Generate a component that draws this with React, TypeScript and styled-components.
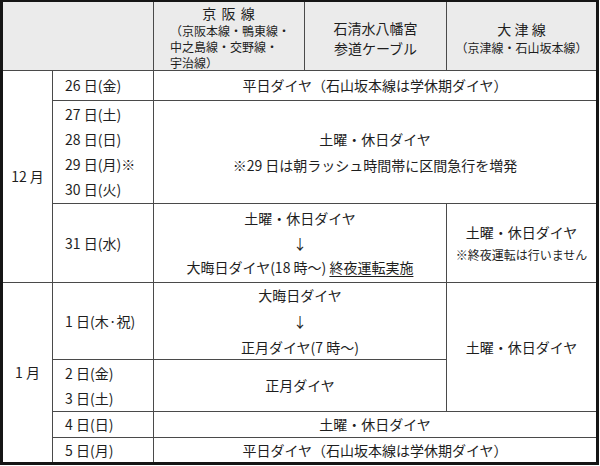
import styled, { createGlobalStyle } from "styled-components";

const GlobalStyle = createGlobalStyle`
  html, body {
    margin: 0;
    padding: 0;
    background: #fff;
  }
  body {
    font-family: "Noto Sans CJK JP", "Noto Sans", sans-serif;
    color: #1e1e1e;
  }
`;

const Table = styled.div`
  width: 599px;
  box-sizing: border-box;
  border: 3px solid #151515;
  border-top-width: 2px;
  display: grid;
  grid-template-columns: 49px 100px 150px 141px 149px;
  grid-template-rows: 68px 29px 102px 78px 76px 51px 25px 24px;
  gap: 1px;
  background: #4a4a4a;
`;

const Cell = styled.div<{
  $col: string;
  $row: string;
  $head?: boolean;
  $left?: boolean;
  $lh?: number;
}>`
  grid-column: ${({ $col }) => $col};
  grid-row: ${({ $row }) => $row};
  background: ${({ $head }) => ($head ? "#ebebeb" : "#fff")};
  display: flex;
  flex-direction: column;
  justify-content: center;
  align-items: ${({ $left }) => ($left ? "flex-start" : "center")};
  padding-left: ${({ $left }) => ($left ? "12px" : "0")};
  font-size: 14px;
  line-height: ${({ $lh }) => $lh ?? 25}px;
  white-space: nowrap;
`;

const HeadCell = styled(Cell)`
  justify-content: flex-start;
  padding-top: 1px;
`;

const HeadTitle = styled.div`
  align-self: center;
  font-size: 14px;
  line-height: 20px;
  letter-spacing: 1px;
`;

const SubList = styled.div`
  align-self: stretch;
  padding-left: 16px;
  font-size: 12px;
  line-height: 16px;
`;

const HeadCenter = styled(Cell)`
  line-height: 20px;
  padding-top: 4px;
  box-sizing: border-box;
`;

const Small = styled.div<{ $lh?: number }>`
  font-size: 12px;
  line-height: ${({ $lh }) => $lh ?? 22}px;
`;

const Under = styled.span`
  text-decoration: underline;
  text-underline-offset: 3px;
`;

export default function App() {
  return (
    <>
      <GlobalStyle />
      <Table>
        <Cell $col="1 / 3" $row="1" $head />
        <HeadCell $col="3" $row="1" $head>
          <HeadTitle>京 阪 線</HeadTitle>
          <SubList>
            <div>（京阪本線・鴨東線・</div>
            <div>中之島線・交野線・</div>
            <div>宇治線）</div>
          </SubList>
        </HeadCell>
        <HeadCenter $col="4" $row="1" $head>
          <div>石清水八幡宮</div>
          <div>参道ケーブル</div>
        </HeadCenter>
        <HeadCenter $col="5" $row="1" $head>
          <div>大 津 線</div>
          <Small $lh={18}>（京津線・石山坂本線）</Small>
        </HeadCenter>

        <Cell $col="1" $row="2 / 5">12 月</Cell>
        <Cell $col="2" $row="2" $left>26 日(金)</Cell>
        <Cell $col="3 / 6" $row="2">平日ダイヤ（石山坂本線は学休期ダイヤ）</Cell>

        <Cell $col="2" $row="3" $left>
          <div>27 日(土)</div>
          <div>28 日(日)</div>
          <div>29 日(月)※</div>
          <div>30 日(火)</div>
        </Cell>
        <Cell $col="3 / 6" $row="3" $lh={26}>
          <div>土曜・休日ダイヤ</div>
          <div>※29 日は朝ラッシュ時間帯に区間急行を増発</div>
        </Cell>

        <Cell $col="2" $row="4" $left>31 日(水)</Cell>
        <Cell $col="3 / 5" $row="4" $lh={24.5}>
          <div>土曜・休日ダイヤ</div>
          <div>↓</div>
          <div>
            大晦日ダイヤ(18 時～) <Under>終夜運転実施</Under>
          </div>
        </Cell>
        <Cell $col="5" $row="4" $lh={24}>
          <div>土曜・休日ダイヤ</div>
          <Small>※終夜運転は行いません</Small>
        </Cell>

        <Cell $col="1" $row="5 / 9">1 月</Cell>
        <Cell $col="2" $row="5" $left>1 日(木·祝)</Cell>
        <Cell $col="3 / 5" $row="5" $lh={26}>
          <div>大晦日ダイヤ</div>
          <div>↓</div>
          <div>正月ダイヤ(7 時～)</div>
        </Cell>
        <Cell $col="5" $row="5 / 7">土曜・休日ダイヤ</Cell>

        <Cell $col="2" $row="6" $left>
          <div>2 日(金)</div>
          <div>3 日(土)</div>
        </Cell>
        <Cell $col="3 / 5" $row="6">正月ダイヤ</Cell>

        <Cell $col="2" $row="7" $left>4 日(日)</Cell>
        <Cell $col="3 / 6" $row="7">土曜・休日ダイヤ</Cell>

        <Cell $col="2" $row="8" $left>5 日(月)</Cell>
        <Cell $col="3 / 6" $row="8">平日ダイヤ（石山坂本線は学休期ダイヤ）</Cell>
      </Table>
    </>
  );
}
